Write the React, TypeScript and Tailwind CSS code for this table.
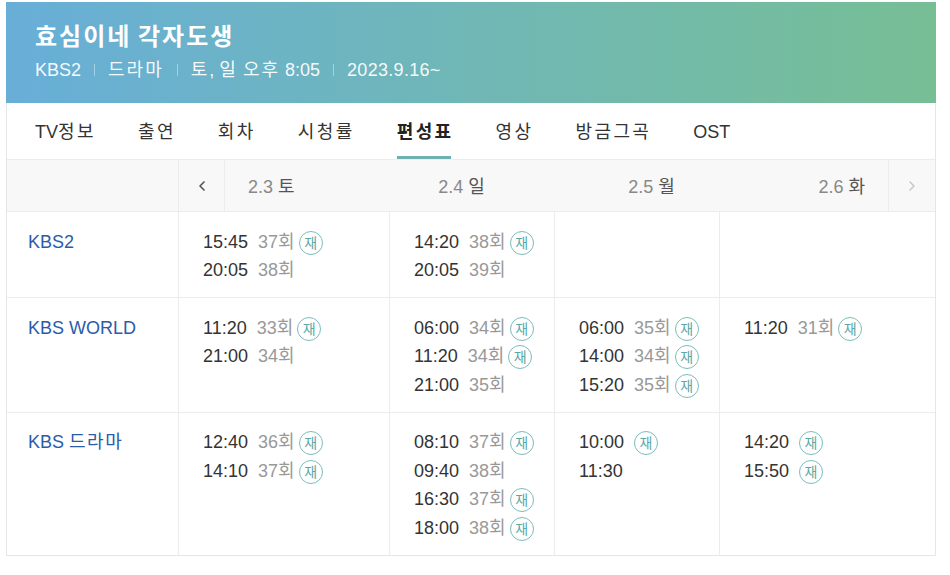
import { ChevronLeft, ChevronRight } from "lucide-react";

type Slot = { time: string; ep?: string; re?: boolean };

const tabs = ["TV정보", "출연", "회차", "시청률", "편성표", "영상", "방금그곡", "OST"];
const dates = [
    ["2.3", "토"],
    ["2.4", "일"],
    ["2.5", "월"],
    ["2.6", "화"],
];

const rows: { channel: string; days: Slot[][] }[] = [
    {
        channel: "KBS2",
        days: [
            [
                { time: "15:45", ep: "37회", re: true },
                { time: "20:05", ep: "38회" },
            ],
            [
                { time: "14:20", ep: "38회", re: true },
                { time: "20:05", ep: "39회" },
            ],
            [],
            [],
        ],
    },
    {
        channel: "KBS WORLD",
        days: [
            [
                { time: "11:20", ep: "33회", re: true },
                { time: "21:00", ep: "34회" },
            ],
            [
                { time: "06:00", ep: "34회", re: true },
                { time: "11:20", ep: "34회", re: true },
                { time: "21:00", ep: "35회" },
            ],
            [
                { time: "06:00", ep: "35회", re: true },
                { time: "14:00", ep: "34회", re: true },
                { time: "15:20", ep: "35회", re: true },
            ],
            [{ time: "11:20", ep: "31회", re: true }],
        ],
    },
    {
        channel: "KBS 드라마",
        days: [
            [
                { time: "12:40", ep: "36회", re: true },
                { time: "14:10", ep: "37회", re: true },
            ],
            [
                { time: "08:10", ep: "37회", re: true },
                { time: "09:40", ep: "38회" },
                { time: "16:30", ep: "37회", re: true },
                { time: "18:00", ep: "38회", re: true },
            ],
            [
                { time: "10:00", re: true },
                { time: "11:30" },
            ],
            [
                { time: "14:20", re: true },
                { time: "15:50", re: true },
            ],
        ],
    },
];

// hangul in the reference font runs wider than Noto CJK, so pad the korean runs a little
function Wide({ text, spacing }: { text: string; spacing: string }) {
    const parts = text.split(/([가-힣]+)/);
    return (
        <span className="whitespace-pre">
            {parts.map((p, i) =>
                /[가-힣]/.test(p) ? (
                    <span key={i} className={spacing}>
                        {p}
                    </span>
                ) : (
                    <span key={i}>{p}</span>
                )
            )}
        </span>
    );
}

function Sep() {
    return <span className="mx-[13px] inline-block h-[12px] w-px bg-white/40" />;
}

function ReBadge() {
    return (
        <span className="ml-[4px] inline-flex h-[24px] w-[24px] items-center justify-center rounded-full border border-[#7bbcbc] text-[14px] leading-none text-[#5aa9a9]">
            재
        </span>
    );
}

function SlotLine({ slot }: { slot: Slot }) {
    return (
        <div className="flex h-[28.5px] items-center">
            <span className="text-[#333]">{slot.time}</span>
            {slot.ep && <span className="ml-[10px] text-[#999]">{slot.ep}</span>}
            {slot.re && <span className={slot.ep ? "" : "ml-[6px]"}><ReBadge /></span>}
        </div>
    );
}

export default function App() {
    return (
        <div
            className="min-h-[575px] bg-white pl-[6px] pt-[2px]"
            style={{ fontFamily: '"Liberation Sans", "Noto Sans CJK KR", sans-serif' }}
        >
            <div className="w-[930px] border-x border-b border-[#e6e6e6]">
                <div className="-mx-px h-[101px] bg-gradient-to-r from-[#68aed8] via-[#70b7b6] to-[#77be95] pl-[29px] pt-[19px] text-white">
                    <h1 className="text-[24px] font-bold leading-[32px]">
                        <Wide text="효심이네 각자도생" spacing="tracking-[2px]" />
                    </h1>
                    <div className="mt-[5px] flex items-center text-[18px] leading-[24px] text-white/95">
                        <span>KBS2</span>
                        <Sep />
                        <Wide text="드라마" spacing="tracking-[2px]" />
                        <Sep />
                        <Wide text="토, 일 오후 8:05" spacing="tracking-[2px]" />
                        <Sep />
                        <span className="tracking-[0.3px]">2023.9.16~</span>
                    </div>
                </div>

                <div className="flex h-[57px] items-center gap-[42px] border-b border-[#ececec] pl-[28px] pt-[3px] text-[18px] text-[#333]">
                    {tabs.map((t) => (
                        <div
                            key={t}
                            className={
                                t === "편성표"
                                    ? "relative flex h-full items-center font-bold text-[#222]"
                                    : "flex h-full items-center"
                            }
                        >
                            <Wide text={t} spacing="tracking-[2.4px]" />
                            {t === "편성표" && (
                                <span className="absolute bottom-0 left-0 right-[3px] h-[3px] bg-[#6fb0b0]" />
                            )}
                        </div>
                    ))}
                </div>

                <div className="grid h-[52px] grid-cols-[172px_46px_1fr_47px] border-b border-[#ececec] bg-[#f8f8f8] text-[18px]">
                    <div className="border-r border-[#ececec]" />
                    <div className="flex items-center justify-center border-r border-[#ececec] text-[#555]">
                        <ChevronLeft size={16} strokeWidth={2.5} />
                    </div>
                    <div className="flex items-center justify-between px-[23px] pt-[3px]">
                        {dates.map(([d, w]) => (
                            <span key={d}>
                                <span className="text-[#888]">{d}</span>{" "}
                                <span className="text-[#555]">{w}</span>
                            </span>
                        ))}
                    </div>
                    <div className="flex items-center justify-center border-l border-[#ececec] text-[#c4c4c4]">
                        <ChevronRight size={16} strokeWidth={2} />
                    </div>
                </div>

                {rows.map((r, i) => (
                    <div
                        key={r.channel}
                        className={
                            i < rows.length - 1
                                ? "grid grid-cols-[172px_211px_165px_165px_1fr] border-b border-[#ececec] text-[18px]"
                                : "grid grid-cols-[172px_211px_165px_165px_1fr] text-[18px]"
                        }
                    >
                        <div className="border-r border-[#ececec] pl-[21px] pt-[16px] pb-[13px]">
                            <div className="flex h-[28.5px] items-center text-[#2b5ba9]">
                                <Wide text={r.channel} spacing="tracking-[1.5px]" />
                            </div>
                        </div>
                        {r.days.map((d, j) => (
                            <div
                                key={j}
                                className={
                                    j < 3
                                        ? "border-r border-[#ececec] pl-[24px] pt-[16px] pb-[12px]"
                                        : "pl-[24px] pt-[16px] pb-[12px]"
                                }
                            >
                                {d.map((s, k) => (
                                    <SlotLine key={k} slot={s} />
                                ))}
                            </div>
                        ))}
                    </div>
                ))}
            </div>
        </div>
    );
}
